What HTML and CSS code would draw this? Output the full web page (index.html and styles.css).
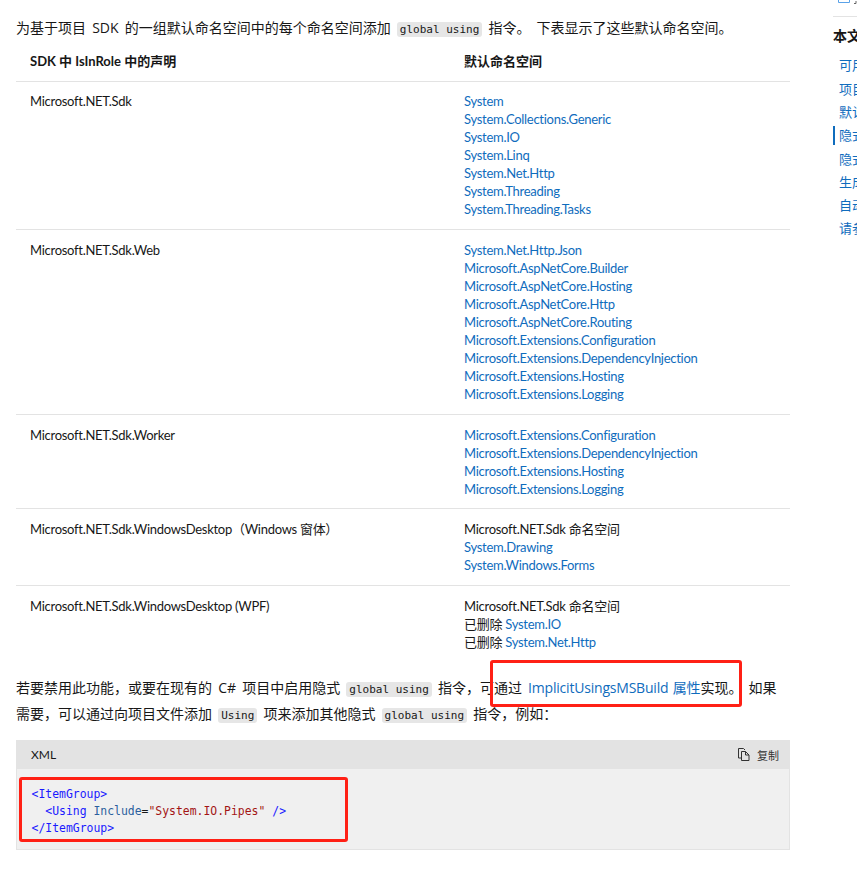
FILE: index.html
```html
<!DOCTYPE html>
<html lang="zh-CN">
<head>
<meta charset="utf-8">
<title>隐式 using 指令</title>
<link rel="stylesheet" href="styles.css">
</head>
<body>
<div class="page">
<main class="content">
<p class="intro">为基于项目 SDK 的一组默认命名空间中的每个命名空间添加 <code>global using</code> 指令。 下表显示了这些默认命名空间。</p>
<table class="sdk">
<thead><tr><th>SDK 中 IsInRole 中的声明</th><th>默认命名空间</th></tr></thead>
<tbody>
<tr><td>Microsoft.NET.Sdk</td><td><a>System</a><br><a>System.Collections.Generic</a><br><a>System.IO</a><br><a>System.Linq</a><br><a>System.Net.Http</a><br><a>System.Threading</a><br><a>System.Threading.Tasks</a></td></tr>
<tr><td>Microsoft.NET.Sdk.Web</td><td><a>System.Net.Http.Json</a><br><a>Microsoft.AspNetCore.Builder</a><br><a>Microsoft.AspNetCore.Hosting</a><br><a>Microsoft.AspNetCore.Http</a><br><a>Microsoft.AspNetCore.Routing</a><br><a>Microsoft.Extensions.Configuration</a><br><a>Microsoft.Extensions.DependencyInjection</a><br><a>Microsoft.Extensions.Hosting</a><br><a>Microsoft.Extensions.Logging</a></td></tr>
<tr><td>Microsoft.NET.Sdk.Worker</td><td><a>Microsoft.Extensions.Configuration</a><br><a>Microsoft.Extensions.DependencyInjection</a><br><a>Microsoft.Extensions.Hosting</a><br><a>Microsoft.Extensions.Logging</a></td></tr>
<tr><td>Microsoft.NET.Sdk.WindowsDesktop（Windows 窗体）</td><td>Microsoft.NET.Sdk 命名空间<br><a>System.Drawing</a><br><a>System.Windows.Forms</a></td></tr>
<tr><td>Microsoft.NET.Sdk.WindowsDesktop (WPF)</td><td>Microsoft.NET.Sdk 命名空间<br>已删除 <a>System.IO</a><br>已删除 <a>System.Net.Http</a></td></tr>
</tbody>
</table>
<p class="after">若要禁用此功能，或要在现有的 C# 项目中启用隐式 <code>global using</code> 指令，可通过 <a class="doclink">ImplicitUsingsMSBuild 属性</a>实现。 如果需要，可以通过向项目文件添加 <code>Using</code> 项来添加其他隐式 <code>global using</code> 指令，例如：</p>
<section class="codeblock">
<header class="codehead"><span>XML</span><button class="copy"><svg class="copyicon" viewBox="0 0 12 13" width="12" height="13"><path d="M.5.5h5l1.500 1.500M.5.5v9.500h2.500M3.500 3.500h4l3.500 3.500v5.500h-7.500zM7.500 3.500v3.500h3.500" fill="none" stroke="#333" stroke-width="1"/></svg><span class="copytext">复制</span></button></header>
<pre class="code"><span class="t">&lt;ItemGroup&gt;</span>
  <span class="t">&lt;Using</span> <span class="at">Include</span>=<span class="s">"System.IO.Pipes"</span> <span class="t">/&gt;</span>
<span class="t">&lt;/ItemGroup&gt;</span></pre>
</section>
</main>
<aside class="side">
<div class="sidetop"><svg class="sideicon" viewBox="0 0 20 4" width="20" height="4"><path d="M.5 0v2.500h11V0" fill="none" stroke="#5aa2e8"/><path d="M16 3.500h2V1" fill="none" stroke="#666"/></svg></div>
<h2>本文内容</h2>
<ul>
<li><a>可用性</a></li><li><a>项目文件</a></li><li><a>默认包含</a></li><li class="on"><a>隐式指令</a></li><li><a>隐式包引用</a></li><li><a>生成事件</a></li><li><a>自动还原</a></li><li><a>请参阅</a></li>
</ul>
</aside>
</div>
<div class="mark mark-link"></div>
<div class="mark mark-code"></div>
</body>
</html>
```
FILE: styles.css
```css
* { box-sizing: border-box; }
html, body { margin: 0; height: 869px; overflow: hidden; background: #fff; }
body {
  position: relative;
  font-family: "Lato", "Noto Sans CJK SC", sans-serif;
  font-size: 13px;
  color: #171717;
}
.page { display: grid; grid-template-columns: 774px 1fr; column-gap: 43px; padding-left: 16px; }
.content { padding-top: 16px; min-width: 0; }
p { margin: 0; font-size: 14px; line-height: 26px; font-family: "Open Sans", "Noto Sans CJK SC", sans-serif; word-spacing: 2.500px; }
.intro { height: 24px; line-height: 24px; }
code {
  font-family: "DejaVu Sans Mono", monospace;
  font-size: 11px;
  line-height: 1;
  word-spacing: 0;
  background: #e6e6e6;
  border-radius: 3px;
  padding: 1px 3px;
}
a { color: #0f6cbd; }
.doclink { letter-spacing: -0.200px; word-spacing: 1px; }
.sdk { width: 100%; border-collapse: collapse; table-layout: fixed; }
.sdk th, .sdk td { text-align: left; vertical-align: top; line-height: 18px; }
.sdk td { padding: 11px 14px; letter-spacing: -0.280px; }
.sdk th { font-weight: 700; padding: 12px 14px 11px; }
.sdk tr { border-bottom: 1px solid #e3e3e3; }
.sdk tbody tr:last-child { border-bottom: 0; }
.sdk tbody tr:first-child td { padding-top: 10px; }
.sdk tbody tr:nth-child(3) td { padding-bottom: 10px; }
.sdk th:first-child, .sdk td:first-child { width: 434px; }
.after { margin-top: 13px; }
.codeblock { margin-top: 13px; }
.codehead {
  height: 29px; background: #e3e3e3; display: flex; align-items: center;
  justify-content: space-between; padding: 0 11px 0 15px; font-size: 12px;
}
.copy { display: flex; align-items: center; gap: 7px; border: 0; background: none; padding: 0; font: inherit; color: #333; }
.copyicon { display: block; }
.copytext { font-size: 11px; }
.code {
  margin: 0; height: 81px; background: #f0f0f0;
  border: 1px solid #e3e3e3; border-top: 0;
  padding: 17px 14.500px 0; color: #171717;
  font-family: "DejaVu Sans Mono", monospace; font-size: 11.430px; line-height: 17px;
}
.t { color: #1a1aff; }
.at { color: #2b5f9e; }
.s { color: #a31515; }
.sidetop { height: 17px; border-bottom: 1px solid #e3e3e3; padding-left: 5px; }
.sideicon { display: block; }
.side { min-width: 0; overflow: hidden; white-space: nowrap; }
.side h2 { margin: 11px 0 10.400px; font-size: 14px; line-height: 16px; font-weight: 700; }
.side ul { list-style: none; margin: 0; padding: 0; }
.side li { height: 23.300px; line-height: 23px; padding-left: 6px; position: relative; font-size: 13px; }
.side li.on::before { content: ""; position: absolute; left: 0; top: 2px; width: 2px; height: 19px; background: #0f6cbd; }
.mark { position: absolute; border: 3px solid #ff2015; border-radius: 3px; }
.mark-link { left: 490px; top: 660px; width: 252px; height: 47px; }
.mark-code { left: 19px; top: 777px; width: 329px; height: 65px; }
```
